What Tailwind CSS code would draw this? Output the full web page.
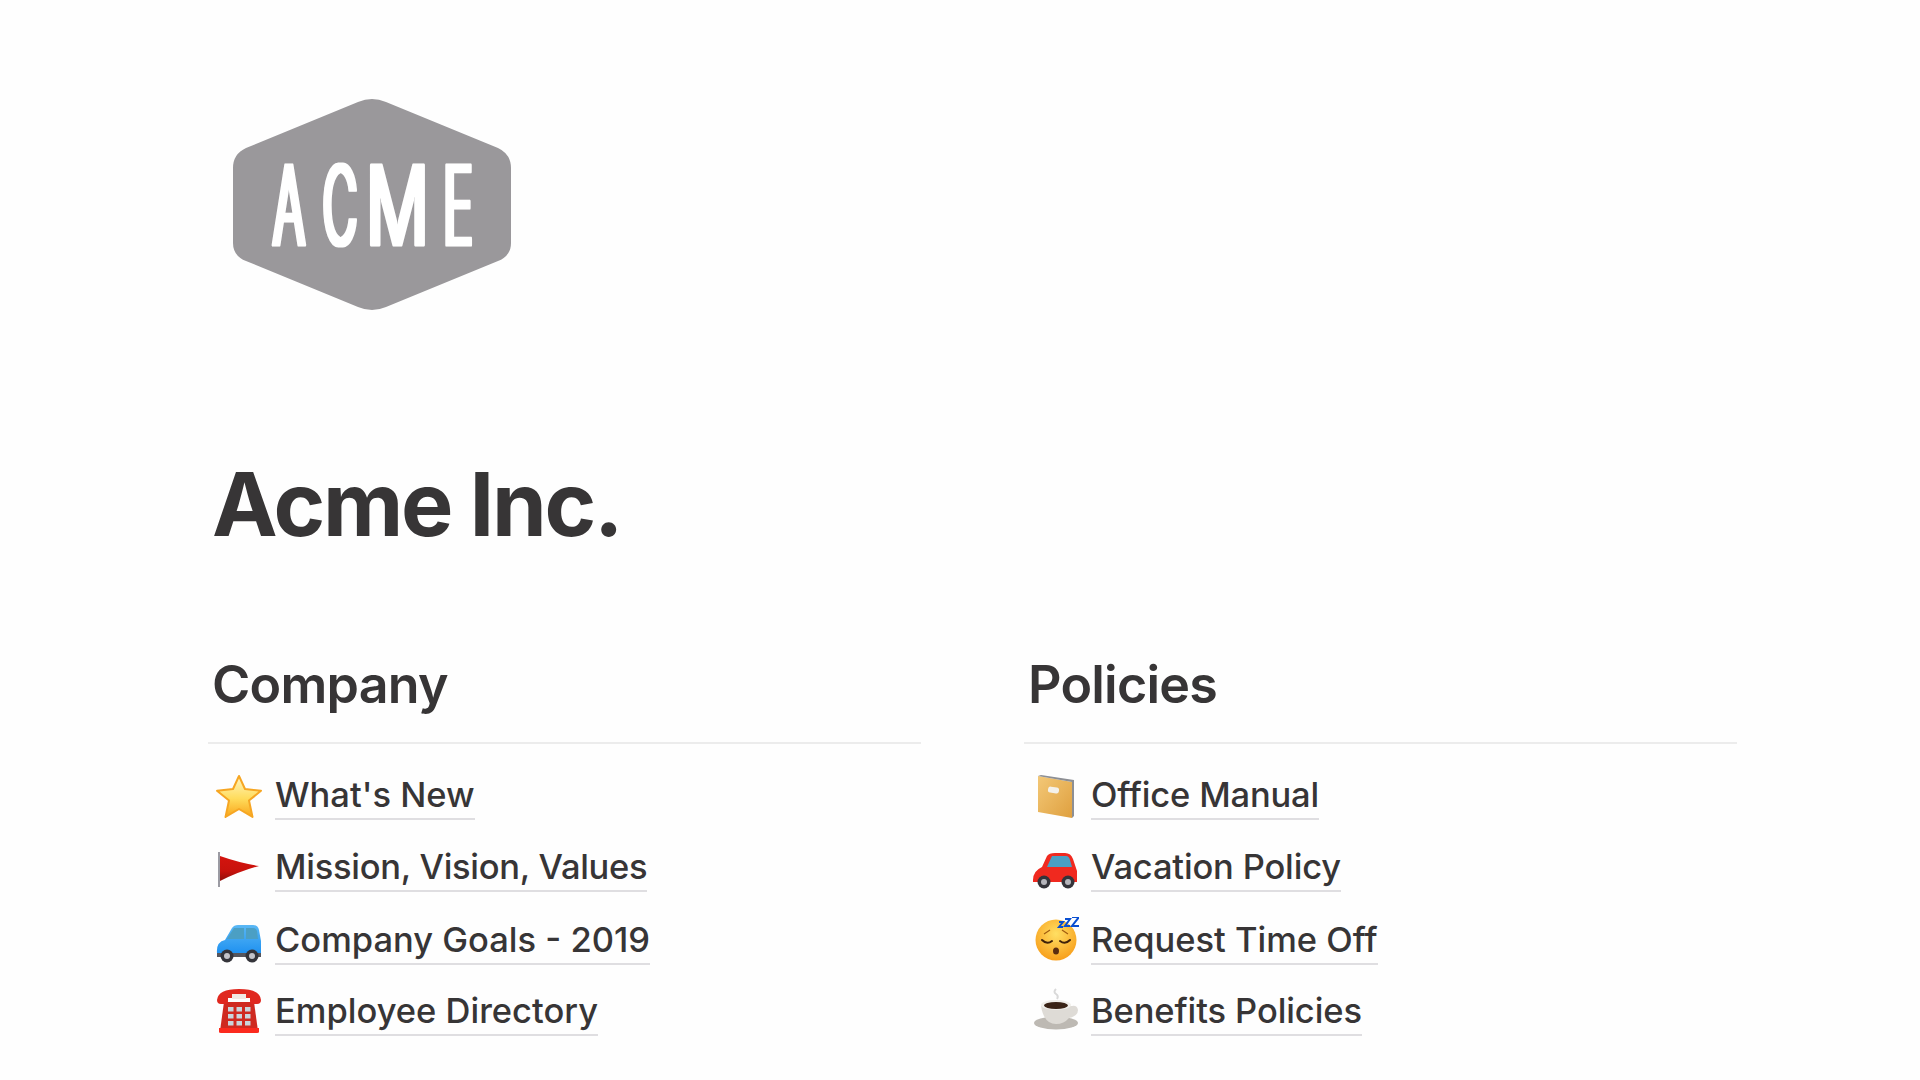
<!DOCTYPE html>
<html lang="en">
<head>
    <meta charset="UTF-8">
    <title>Acme Inc.</title>
    <script src="https://cdn.jsdelivr.net/npm/@tailwindcss/browser@4"></script>
</head>
<body class="bg-[#fefefe] text-[#373536] font-['Inter',sans-serif] h-[1080px] overflow-hidden">
    <main class="w-[1737px] pl-[208px] pt-[98px]">
        <svg class="ml-[25px] w-[278px] h-[213px]" viewBox="0 0 278 213">
            <defs><filter id="fat" x="-10%" y="-10%" width="120%" height="120%"><feMorphology operator="dilate" radius="1.5 0"/></filter></defs>
            <path fill="#9a989b" d="M125 4 Q139 -2 153 4 L265 50 Q278 56 278 70 L278 145 Q278 158 265 163 L153 209 Q139 215 125 209 L13 163 Q0 158 0 145 L0 70 Q0 56 13 50 Z"/>
            <g filter="url(#fat)" font-family="Inter" font-weight="300" font-size="110" fill="#fff" stroke="#fff" stroke-width="3" stroke-linejoin="round" text-anchor="middle">
                <text transform="translate(56 146.5) scale(0.43 1)">A</text>
                <text transform="translate(107 146.5) scale(0.43 1)">C</text>
                <text transform="translate(164.5 146.5) scale(0.63 1)">M</text>
                <text transform="translate(225 146.5) scale(0.45 1)">E</text>
            </g>
        </svg>

        <h1 class="pl-[4px] mt-[138px] text-[88px] leading-[110px] font-bold tracking-[-0.026em]">Acme Inc.</h1>

        <div class="grid grid-cols-[713px_713px] gap-x-[103px] mt-[94px]">
            <section>
                <h2 class="pl-[4px] text-[52px] leading-[64px] font-semibold tracking-[-0.015em] pb-[25px] border-b-2 border-[#ececec]">Company</h2>
                <ul class="pl-[6px] pt-[16px] text-[34.5px] leading-[46px] font-medium">
                    <li class="flex items-center gap-[13px] h-[72px]">
                        <svg class="w-12 h-12" viewBox="0 0 48 48">
                            <defs><linearGradient id="star" x1="0" y1="0" x2="0" y2="1"><stop offset="0" stop-color="#fff6c4"/><stop offset="0.55" stop-color="#ffdc5c"/><stop offset="1" stop-color="#f9a51a"/></linearGradient></defs>
                            <path d="M25 4 L31 17 L47 18.8 L35 28.5 L38.5 45 L25 37 L11.5 45 L15 28.5 L3 18.8 L19 17 Z" fill="url(#star)" stroke="#f6a623" stroke-width="2" stroke-linejoin="round"/>
                        </svg>
                        <a class="border-b-2 border-[#dfdee1]">What's New</a>
                    </li>
                    <li class="flex items-center gap-[13px] h-[72px]">
                        <svg class="w-12 h-12" viewBox="0 0 48 48">
                            <path d="M5 8 V43" stroke="#9b9ba3" stroke-width="2"/>
                            <defs><linearGradient id="flag" x1="0" y1="0" x2="0" y2="1"><stop offset="0" stop-color="#d4140e"/><stop offset="0.6" stop-color="#c8120c"/><stop offset="1" stop-color="#8f0f0a"/></linearGradient></defs>
                            <path d="M6 12 Q26 19 45 22 Q26 27 6 37 Z" fill="url(#flag)"/>
                        </svg>
                        <a class="border-b-2 border-[#dfdee1] tracking-[-0.008em]">Mission, Vision, Values</a>
                    </li>
                    <li class="flex items-center gap-[13px] h-[72px] mt-px">
                        <svg class="w-12 h-12" viewBox="0 0 48 48">
                            <defs><linearGradient id="blue" x1="0" y1="0" x2="0" y2="1"><stop offset="0" stop-color="#5ab8f5"/><stop offset="1" stop-color="#1c8ff0"/></linearGradient></defs>
                            <path d="M3 36 Q2 25 11 23 L18 11 Q20 8 24 8 H39 Q44 8 45 13 L47 24 V38 H3 Z" fill="url(#blue)"/>
                            <path d="M13 22 L20 11 H30 V22 Z M32 11 H39 Q42 11 43 14 L44 22 H32 Z" fill="#4b9fc4"/>
                            <path d="M3 36 H47 V40 H3 Z" fill="#55555c"/>
                            <circle cx="13" cy="39" r="6.5" fill="#34343a"/><circle cx="13" cy="39" r="3" fill="#c2c2c8"/>
                            <circle cx="38" cy="39" r="6.5" fill="#34343a"/><circle cx="38" cy="39" r="3" fill="#c2c2c8"/>
                        </svg>
                        <a class="border-b-2 border-[#dfdee1]">Company Goals - 2019</a>
                    </li>
                    <li class="flex items-center gap-[13px] h-[72px] -mt-px">
                        <svg class="w-12 h-12" viewBox="0 0 48 48">
                            <path d="M6 43 L10 14 H40 L44 43 Z" fill="#cf2a20"/>
                            <path d="M5 40 H45 V44 Q45 45 43 45 H7 Q5 45 5 44 Z" fill="#fb2a1e"/>
                            <path d="M3 12 Q4 1 25 1 Q46 1 47 12 Q47 16 43 16 H38 Q36 16 36 13 V10 H14 V13 Q14 16 12 16 H7 Q3 16 3 12 Z" fill="#e0281f"/>
                            <rect x="18" y="6" width="14" height="5" fill="#f1e9e4"/>
                            <g fill="#c9d6dc"><rect x="14" y="19" width="5.5" height="4.5"/><rect x="22.5" y="19" width="5.5" height="4.5"/><rect x="31" y="19" width="5.5" height="4.5"/><rect x="14" y="26" width="5.5" height="4.5"/><rect x="22.5" y="26" width="5.5" height="4.5"/><rect x="31" y="26" width="5.5" height="4.5"/><rect x="14" y="33" width="5.5" height="4.5"/><rect x="22.5" y="33" width="5.5" height="4.5"/><rect x="31" y="33" width="5.5" height="4.5"/></g>
                        </svg>
                        <a class="border-b-2 border-[#dfdee1]">Employee Directory</a>
                    </li>
                </ul>
            </section>

            <section>
                <h2 class="pl-[4px] text-[52px] leading-[64px] font-semibold tracking-[-0.015em] pb-[25px] border-b-2 border-[#ececec]">Policies</h2>
                <ul class="pl-[7px] pt-[16px] text-[34.5px] leading-[46px] font-medium">
                    <li class="flex items-center gap-3 h-[72px]">
                        <svg class="w-12 h-12" viewBox="0 0 48 48">
                            <defs><linearGradient id="book" x1="0" y1="0" x2="1" y2="1"><stop offset="0" stop-color="#f3c877"/><stop offset="1" stop-color="#dfa03f"/></linearGradient></defs>
                            <g transform="translate(-2 0)">
                                <path d="M9 4 L43 10 V46 L9 40 Z" fill="url(#book)"/>
                                <path d="M9 4 L12 3 L45 8 V44 L43 46 V10 Z" fill="#8d8f94"/>
                                <rect x="19" y="15" width="11" height="6" rx="2.5" fill="#f4f1ea" transform="rotate(9 24 18)"/>
                            </g>
                        </svg>
                        <a class="border-b-2 border-[#dfdee1] tracking-[-0.005em]">Office Manual</a>
                    </li>
                    <li class="flex items-center gap-3 h-[72px]">
                        <svg class="w-12 h-12" viewBox="0 0 48 48">
                            <path d="M2 36 Q2 27 11 23 L16 12 Q18 9 24 9 H34 Q40 9 42 15 L46 27 V38 H2 Z" fill="#f0291f"/>
                            <path d="M16 23 L21 12 H35 Q38 12 39 16 L41 23 Z" fill="#4b9fc4"/>
                            <circle cx="13" cy="38" r="6.5" fill="#34343a"/><circle cx="13" cy="38" r="3" fill="#b5b5bb"/>
                            <circle cx="37" cy="38" r="6.5" fill="#34343a"/><circle cx="37" cy="38" r="3" fill="#b5b5bb"/>
                        </svg>
                        <a class="border-b-2 border-[#dfdee1] tracking-[-0.005em]">Vacation Policy</a>
                    </li>
                    <li class="flex items-center gap-3 h-[72px] mt-px">
                        <svg class="w-12 h-12" viewBox="0 0 48 48">
                            <defs><radialGradient id="face" cx="0.5" cy="0.35" r="0.7"><stop offset="0" stop-color="#ffdf63"/><stop offset="1" stop-color="#f79a16"/></radialGradient></defs>
                            <g transform="translate(2 -3)">
                                <circle cx="23" cy="26" r="20.5" fill="url(#face)"/>
                                <path d="M9 26 Q14 31 19 27 M27 27 Q32 31 37 26" stroke="#40220a" stroke-width="2" fill="none" stroke-linecap="round"/>
                                <path d="M11 20 Q14 18 17 16 M29 16 Q32 18 35 20" stroke="#a05c10" stroke-width="1.2" fill="none"/>
                                <ellipse cx="23" cy="37" rx="3" ry="3.6" fill="#5a2c10"/>
                                <path d="M26 8 h4 l-4 5 h4 M32 5 h5 l-5 7 h5 M39 3 h7 l-7 9 h7" stroke="#0a4fd1" stroke-width="2" fill="none"/>
                            </g>
                        </svg>
                        <a class="border-b-2 border-[#dfdee1]">Request Time Off</a>
                    </li>
                    <li class="flex items-center gap-3 h-[72px] -mt-px">
                        <svg class="w-12 h-12" viewBox="0 0 48 48">
                            <g transform="translate(1 -3)">
                                <path d="M24 4 Q21 7 24 9 Q27 11 25 14" stroke="#d9d9d9" stroke-width="2" fill="none"/>
                                <ellipse cx="24" cy="38" rx="22" ry="6.5" fill="#bdb9b3"/>
                                <path d="M9 21 H40 Q45 20 46 25 Q46 31 37 33 Q32 39 24 39 Q12 39 9 21 Z" fill="#dedbd6"/>
                                <ellipse cx="24" cy="20" rx="15" ry="5" fill="#f0eeea"/>
                                <ellipse cx="24" cy="20.5" rx="12" ry="3.5" fill="#3a2316"/>
                            </g>
                        </svg>
                        <a class="border-b-2 border-[#dfdee1] tracking-[-0.003em]">Benefits Policies</a>
                    </li>
                </ul>
            </section>
        </div>
    </main>
</body>
</html>
